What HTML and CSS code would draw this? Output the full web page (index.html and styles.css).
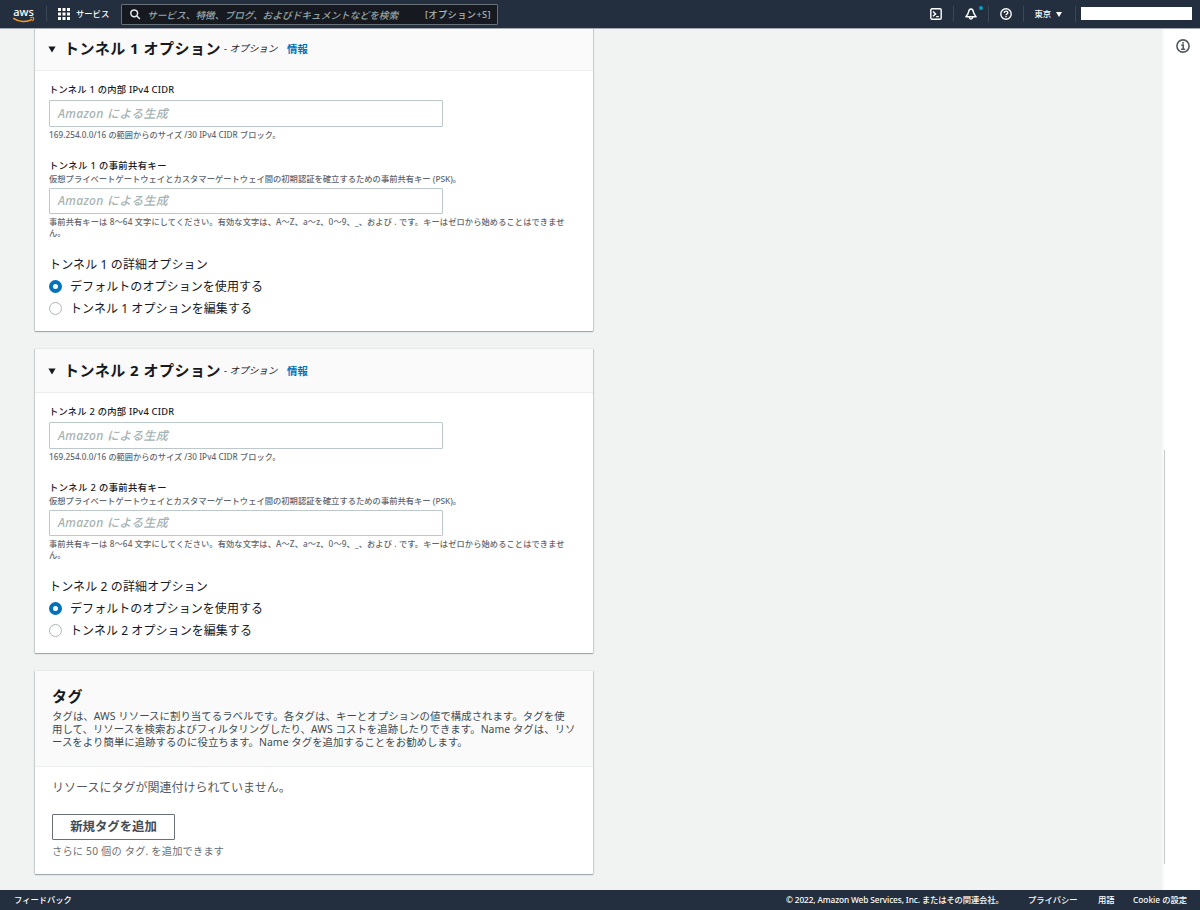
FILE: index.html
```html
<!DOCTYPE html>
<html lang="ja">
<head>
<meta charset="utf-8">
<title>VPN 接続を作成</title>
<link rel="stylesheet" href="styles.css">
</head>
<body>
<header class="nav">
  <svg class="logo" width="23" height="20" viewBox="0 -3 23 20" fill="none">
    <text x="0.300" y="8.600" class="logo-text" textLength="20.500" lengthAdjust="spacingAndGlyphs">aws</text>
    <path d="M.2 11.200c5.800 4.200 13.500 4.300 19.200 1.100" stroke="#f59a23" stroke-width="1.500"/>
    <path d="M17 10.900c1.500-.7 3.300-.6 3.700-.1.300.6-.2 2.200-1.200 3.300" stroke="#f59a23" stroke-width="1.100"/>
  </svg>
  <i class="sep sep-logo"></i>
  <svg class="grid" width="12" height="12" viewBox="0 0 12 12" fill="#fff"><path d="M0 0h3v3H0zM4.500 0h3v3h-3zM9 0h3v3H9zM0 4.500h3v3H0zM4.500 4.500h3v3h-3zM9 4.500h3v3H9zM0 9h3v3H0zM4.500 9h3v3h-3zM9 9h3v3H9z"/></svg>
  <span class="services">サービス</span>
  <div class="search">
    <svg width="11" height="11" viewBox="0 0 11 11" fill="none" stroke="#e8eaed" stroke-width="1.500"><circle cx="4.200" cy="4.300" r="3.400"/><path d="M6.600 6.700l3.300 3.400"/></svg>
    <span class="search-ph">サービス、特徴、ブログ、およびドキュメントなどを検索</span>
    <span class="key">[オプション+S]</span>
  </div>
  <div class="tools">
    <svg width="12" height="12" viewBox="0 0 12 12" fill="none" stroke="#fff" stroke-width="1.400"><rect x=".8" y=".8" width="10.400" height="10.400" rx="1.200"/><path d="M3 3.500l2.600 2.400L3 8.300M6.200 8.600h2.600"/></svg>
    <i class="sep"></i>
    <span class="bell">
      <svg width="12" height="12" viewBox="0 0 12 12" fill="none" stroke="#fff" stroke-width="1.400" stroke-linejoin="round"><path d="M6 1C4.200 1 3.700 2.500 3.500 4.200 3.300 6 2.300 7 .9 8.700h10.200C9.700 7 8.700 6 8.500 4.200 8.300 2.500 7.800 1 6 1zM4.300 9.300c.2 2.300 3.200 2.300 3.400 0"/></svg>
      <i class="dot"></i>
    </span>
    <i class="sep"></i>
    <svg width="12" height="12" viewBox="0 0 12 12" fill="none" stroke="#fff" stroke-width="1.400"><circle cx="6" cy="6" r="5.200"/><path d="M4.200 4.900C4.200 2.500 7.800 2.600 7.800 4.700 7.800 6 6 5.800 6 7.300M6 8.100v1.200"/></svg>
    <i class="sep sep-region"></i>
    <span class="region">東京</span>
    <svg class="caret" width="6" height="5" viewBox="0 0 6 5" fill="#fff"><path d="M0 0h6L3 5z"/></svg>
    <i class="sep sep-last"></i>
    <div class="account"></div>
  </div>
</header>

<div class="page">
  <main class="main">
    <section class="card">
      <div class="card-head">
        <svg class="fold" width="8" height="7" viewBox="0 0 8 7" fill="#16191f"><path d="M.4.4h7.200L4 6.400z"/></svg>
        <h2 class="title">トンネル 1 オプション</h2><span class="opt">- オプション</span><a class="info">情報</a>
      </div>
      <div class="card-body">
        <div class="label">トンネル 1 の内部 IPv4 CIDR</div>
        <div class="input">Amazon による生成</div>
        <div class="hint hint-cidr">169.254.0.0/16 の範囲からのサイズ /30 IPv4 CIDR ブロック。</div>
        <div class="label label-key">トンネル 1 の事前共有キー</div>
        <div class="desc">仮想プライベートゲートウェイとカスタマーゲートウェイ間の初期認証を確立するための事前共有キー (PSK)。</div>
        <div class="input input-key">Amazon による生成</div>
        <div class="hint">事前共有キーは 8〜64 文字にしてください。有効な文字は、A〜Z、a〜z、0〜9、_、および . です。キーはゼロから始めることはできませ<br>ん。</div>
        <div class="group">トンネル 1 の詳細オプション</div>
        <div class="radio"><i class="knob on"></i><span>デフォルトのオプションを使用する</span></div>
        <div class="radio"><i class="knob"></i><span>トンネル 1 オプションを編集する</span></div>
      </div>
    </section>

    <section class="card">
      <div class="card-head">
        <svg class="fold" width="8" height="7" viewBox="0 0 8 7" fill="#16191f"><path d="M.4.4h7.200L4 6.400z"/></svg>
        <h2 class="title">トンネル 2 オプション</h2><span class="opt">- オプション</span><a class="info">情報</a>
      </div>
      <div class="card-body">
        <div class="label">トンネル 2 の内部 IPv4 CIDR</div>
        <div class="input">Amazon による生成</div>
        <div class="hint hint-cidr">169.254.0.0/16 の範囲からのサイズ /30 IPv4 CIDR ブロック。</div>
        <div class="label label-key">トンネル 2 の事前共有キー</div>
        <div class="desc">仮想プライベートゲートウェイとカスタマーゲートウェイ間の初期認証を確立するための事前共有キー (PSK)。</div>
        <div class="input input-key">Amazon による生成</div>
        <div class="hint">事前共有キーは 8〜64 文字にしてください。有効な文字は、A〜Z、a〜z、0〜9、_、および . です。キーはゼロから始めることはできませ<br>ん。</div>
        <div class="group">トンネル 2 の詳細オプション</div>
        <div class="radio"><i class="knob on"></i><span>デフォルトのオプションを使用する</span></div>
        <div class="radio"><i class="knob"></i><span>トンネル 2 オプションを編集する</span></div>
      </div>
    </section>

    <section class="card">
      <div class="tags-head">
        <h2 class="title tags-title">タグ</h2>
        <p class="tags-desc">タグは、AWS リソースに割り当てるラベルです。各タグは、キーとオプションの値で構成されます。タグを使<br>用して、リソースを検索およびフィルタリングしたり、AWS コストを追跡したりできます。Name タグは、リソ<br>ースをより簡単に追跡するのに役立ちます。Name タグを追加することをお勧めします。</p>
      </div>
      <div class="tags-body">
        <div class="empty">リソースにタグが関連付けられていません。</div>
        <button class="btn">新規タグを追加</button>
        <div class="remain">さらに 50 個の タグ. を追加できます</div>
      </div>
    </section>
  </main>
  <aside class="side">
    <svg class="info-icon" width="14" height="14" viewBox="0 0 14 14" fill="none" stroke="#545b64" stroke-width="1.600"><circle cx="7" cy="7" r="6.100"/><path d="M5.300 6.100h1.900v3.800M5 10.200h4.200M6.300 3.900h1.500"/></svg>
    <i class="thumb"></i>
  </aside>
</div>

<footer class="footer">
  <span class="feedback">フィードバック</span>
  <span class="copy">© 2022, Amazon Web Services, Inc. またはその関連会社。</span>
  <span class="privacy">プライバシー</span>
  <span class="terms">用語</span>
  <span class="cookie">Cookie の設定</span>
</footer>
</body>
</html>
```
FILE: styles.css
```css
* { box-sizing: border-box; }
body {
  margin: 0;
  width: 1200px;
  height: 910px;
  overflow: hidden;
  display: flex;
  flex-direction: column;
  font-family: "Noto Sans", "Noto Sans CJK JP", sans-serif;
  font-weight: 400;
  color: #16191f;
  background: #f1f3f3;
  white-space: nowrap;
}
svg { display: block; flex: none; }

.nav {
  flex: none;
  height: 28px;
  display: flex;
  align-items: center;
  padding: 0 8px 0 13px;
  background: #232f3e;
  color: #fff;
  font-weight: 500;
  position: relative;
  z-index: 1;
  box-shadow: 0 1px 0 #a5aab2;
}
.logo-text { font-size: 11.5px; font-weight: 500; fill: #fff; }
.logo { margin-top: -1px; }
.sep { width: 1px; height: 16px; background: #3b4754; flex: none; }
.sep-logo { margin: 0 11px 0 10px; }
.services { margin-left: 6px; width: 45px; margin-top: -2px; font-size: 8.3px; }
.search {
  width: 377px;
  height: 21px;
  margin-top: 1px;
  border: 1px solid #687078;
  border-radius: 1px;
  background: #16191f;
  display: flex;
  align-items: center;
  padding: 0 6px 0 8px;
}
.search-ph { margin-left: 6px; font-size: 9.7px; font-style: italic; color: #95a5a6; }
.key { margin-left: auto; margin-top: -2px; font-size: 9.2px; letter-spacing: 0.42px; color: #aab7b8; }
.tools { margin-left: auto; display: flex; align-items: center; }
.tools .sep { margin: 0 11px; }
.tools .sep-region { margin-right: 10px; }
.tools .sep-last { margin: 0 5px 0 13px; }
.bell { position: relative; }
.dot { position: absolute; left: 14px; top: -2px; width: 4px; height: 4px; border-radius: 50%; background: #00a1c9; }
.region { margin-top: -2px; font-size: 8.3px; }
.caret { margin-left: 5px; }
.account { width: 111px; height: 13px; margin-top: -1px; background: #fff; }

.page { flex: 1; min-height: 0; display: flex; justify-content: space-between; }
.main { width: 594px; margin-top: -1px; padding-left: 35px; display: flex; flex-direction: column; gap: 18px; }
.card {
  width: 558px;
  background: #fff;
  box-shadow: 0 1px 1px rgba(0, 28, 36, 0.3), 1px 0 1px rgba(0, 28, 36, 0.12), -1px 0 1px rgba(0, 28, 36, 0.12);
}
.card-head {
  height: 44px;
  display: flex;
  align-items: center;
  padding-left: 13px;
  background: #fafafa;
  border-bottom: 1px solid #eaeded;
}
.fold { margin-top: 2px; }
.title { margin: 0; font-size: 15px; line-height: 22px; font-weight: 700; }
.card-head .title { margin: -1px 0 0 8px; width: 160px; letter-spacing: 0.5px; }
.opt { margin-top: -1px; font-size: 9.6px; font-style: italic; color: #16191f; width: 63px; }
.info { font-size: 10.4px; font-weight: 700; color: #0073bb; }
.card-body { height: 260px; padding: 13px 14px 0; }
.label { font-size: 9.3px; line-height: 12px; font-weight: 500; letter-spacing: 0.22px; }
.input {
  width: 394px;
  height: 27px;
  margin-top: 4px;
  border: 1px solid #bcc8c9;
  border-radius: 1px;
  padding-left: 8px;
  font-size: 12px;
  line-height: 25px;
  letter-spacing: 0.3px;
  font-style: italic;
  font-weight: 500;
  color: #a5b3b4;
}
.hint { margin-top: 2px; font-size: 8.2px; line-height: 11px; letter-spacing: 0.15px; font-weight: 500; color: #5f666f; }
.hint-cidr { letter-spacing: 0.04px; }
.label-key { margin-top: 20px; letter-spacing: 0.4px; }
.desc { font-size: 8.3px; line-height: 12px; margin-top: 1px; font-weight: 500; color: #5f666f; }
.input-key { margin-top: 3px; height: 26px; line-height: 24px; }
.group { margin-top: 19px; font-size: 12px; line-height: 16px; letter-spacing: 0.13px; }
.radio { display: flex; align-items: center; height: 22px; font-size: 12px; letter-spacing: 0.07px; gap: 8px; }
.group + .radio { margin-top: 2px; }
.knob { width: 13px; height: 13px; border-radius: 50%; border: 1px solid #aab7b8; background: #fff; }
.knob.on { border: 4px solid #0073bb; }

.tags-head { height: 96px; padding: 14px 17px 0; background: #fafafa; border-bottom: 1px solid #eaeded; }
.tags-title { letter-spacing: 0.5px; }
.tags-desc { margin: 3px 0 0; font-size: 10.4px; line-height: 13px; letter-spacing: 0.05px; color: #414a54; }
.tags-body { height: 107px; padding: 12px 17px 0; }
.empty { font-size: 12px; line-height: 18px; color: #545b64; }
.btn {
  display: block;
  width: 123px;
  height: 26px;
  margin-top: 17px;
  padding: 0;
  border: 1px solid #687078;
  border-radius: 1px;
  background: #fff;
  font: 700 12.400px/22px "Noto Sans", "Noto Sans CJK JP", sans-serif;
  color: #444c57;
}
.remain { margin-top: 4px; font-size: 10.2px; line-height: 14px; letter-spacing: 0.22px; color: #687078; }

.side { width: 38px; background: #fff; border-left: 2px solid #f7f8f8; padding: 11px 0 0; }
.info-icon { margin-left: 12px; }
.thumb { display: block; width: 1px; height: 414px; margin-top: 397px; background: #c9cbcc; }

.footer {
  flex: none;
  height: 20px;
  display: flex;
  align-items: center;
  padding: 0 14px 2px;
  background: #232f3e;
  color: #fff;
  font-size: 8.3px;
  font-weight: 500;
}
.copy { margin-left: auto; width: 242px; letter-spacing: -0.12px; }
.privacy { width: 70px; }
.terms { width: 35px; }
.cookie { width: 53px; }
```
